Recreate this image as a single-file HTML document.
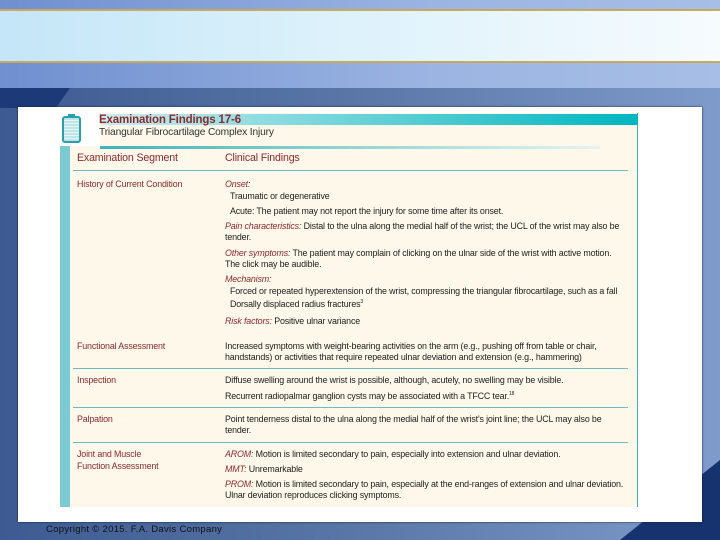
<!DOCTYPE html>
<html><head><style>
*{margin:0;padding:0;box-sizing:border-box}
body{width:720px;height:540px;overflow:hidden;position:relative;font-family:"Liberation Sans",sans-serif;background:linear-gradient(90deg,#6f8fcf,#9bb4e2 60%,#a7bfe6)}
.a{position:absolute}
.t{position:absolute;font-size:8.9px;color:#222;white-space:nowrap;letter-spacing:-0.15px}
.r{color:#8b2a2e}
.i{font-style:italic;color:#8b2a2e}
.ln{position:absolute;height:1px;background:#6bbcc4}
</style></head><body>
<div class="a" style="left:0;top:9px;width:720px;height:2px;background:#c9a860"></div>
<div class="a" style="left:0;top:11px;width:720px;height:50px;background:linear-gradient(90deg,#c4e6f8,#def2fb 50%,#f6fbfe)"></div>
<div class="a" style="left:0;top:61px;width:720px;height:2px;background:#c9a860"></div>
<div class="a" style="left:0;top:88px;width:720px;height:452px;background:linear-gradient(90deg,#3d5b92,#5b77a8 50%,#7f9bcb)"></div>
<div class="a" style="left:0;top:88px;width:70px;height:20px;background:#1c3a78;clip-path:polygon(0 0,100% 0,80% 100%,0 100%)"></div>
<svg class="a" style="left:0;top:0" width="720" height="540"><polygon points="720,460 720,540 620,540" fill="#17336f"/></svg>
<div class="a" style="left:18px;top:107px;width:684px;height:415px;background:#fff;box-shadow:0 0 2px #123"></div>
<div class="a" style="left:60px;top:113px;width:578px;height:394px;background:#fdf8ea;border-right:1px solid #3fb3bb"></div>
<div class="a" style="left:100px;top:114px;width:538px;height:11px;background:linear-gradient(90deg,#cdecee,#00b6bf)"></div>
<div class="a" style="left:60px;top:145px;width:10px;height:362px;background:#7dcbd2"></div>
<div class="a" style="left:60px;top:113px;width:40px;height:33px;background:#fff"></div>
<div class="a" style="left:62px;top:116px;width:19px;height:27px;border:2px solid #27a0ab;border-radius:3px;background:repeating-linear-gradient(#bfe4e8 0 2px,#e9f6f7 2px 3px)"></div>
<div class="a" style="left:68px;top:114px;width:7px;height:4px;background:#27a0ab"></div>
<div class="a" style="left:100px;top:146px;width:500px;height:3px;background:linear-gradient(90deg,#3fb3bb,#e6f4f0)"></div>
<div class="t" style="left:99px;top:114px;font-size:11.5px;font-weight:bold;color:#8b2a2e">Examination Findings 17-6</div>
<div class="t" style="left:99px;top:127px;font-size:10.2px;color:#333">Triangular Fibrocartilage Complex Injury</div>
<div class="t r" style="left:77px;top:152px;font-size:10.6px">Examination Segment</div>
<div class="t r" style="left:225px;top:152px;font-size:10.6px">Clinical Findings</div>
<div class="ln" style="left:73px;top:170px;width:555px"></div>
<div class="t r" style="left:77px;top:179px">History of Current Condition</div>
<div class="t i" style="left:225px;top:179px">Onset:</div>
<div class="t" style="left:230px;top:191px">Traumatic or degenerative</div>
<div class="t" style="left:230px;top:206px">Acute: The patient may not report the injury for some time after its onset.</div>
<div class="t" style="left:225px;top:221px"><span class="i">Pain characteristics:</span> Distal to the ulna along the medial half of the wrist; the UCL of the wrist may also be</div>
<div class="t" style="left:225px;top:232px">tender.</div>
<div class="t" style="left:225px;top:248px"><span class="i">Other symptoms:</span> The patient may complain of clicking on the ulnar side of the wrist with active motion.</div>
<div class="t" style="left:225px;top:259px">The click may be audible.</div>
<div class="t i" style="left:225px;top:274px">Mechanism:</div>
<div class="t" style="left:230px;top:286px">Forced or repeated hyperextension of the wrist, compressing the triangular fibrocartilage, such as a fall</div>
<div class="t" style="left:230px;top:299px">Dorsally displaced radius fractures<sup style="font-size:5px">3</sup></div>
<div class="t" style="left:225px;top:316px"><span class="i">Risk factors:</span> Positive ulnar variance</div>
<div class="t r" style="left:77px;top:341px">Functional Assessment</div>
<div class="t" style="left:225px;top:341px">Increased symptoms with weight-bearing activities on the arm (e.g., pushing off from table or chair,</div>
<div class="t" style="left:225px;top:352px">handstands) or activities that require repeated ulnar deviation and extension (e.g., hammering)</div>
<div class="ln" style="left:73px;top:368px;width:555px"></div>
<div class="t r" style="left:77px;top:375px">Inspection</div>
<div class="t" style="left:225px;top:375px">Diffuse swelling around the wrist is possible, although, acutely, no swelling may be visible.</div>
<div class="t" style="left:225px;top:391px">Recurrent radiopalmar ganglion cysts may be associated with a TFCC tear.<sup style="font-size:5px">18</sup></div>
<div class="ln" style="left:73px;top:407px;width:555px"></div>
<div class="t r" style="left:77px;top:414px">Palpation</div>
<div class="t" style="left:225px;top:414px">Point tenderness distal to the ulna along the medial half of the wrist's joint line; the UCL may also be</div>
<div class="t" style="left:225px;top:425px">tender.</div>
<div class="ln" style="left:73px;top:442px;width:555px"></div>
<div class="t r" style="left:77px;top:449px">Joint and Muscle</div>
<div class="t r" style="left:77px;top:461px">Function Assessment</div>
<div class="t" style="left:225px;top:449px"><span class="i">AROM:</span> Motion is limited secondary to pain, especially into extension and ulnar deviation.</div>
<div class="t" style="left:225px;top:464px"><span class="i">MMT:</span> Unremarkable</div>
<div class="t" style="left:225px;top:479px"><span class="i">PROM:</span> Motion is limited secondary to pain, especially at the end-ranges of extension and ulnar deviation.</div>
<div class="t" style="left:225px;top:490px">Ulnar deviation reproduces clicking symptoms.</div>
<div class="t" style="left:46px;top:524px;font-size:9.5px;color:#111;letter-spacing:0.3px">Copyright © 2015. F.A. Davis Company</div>
</body></html>
